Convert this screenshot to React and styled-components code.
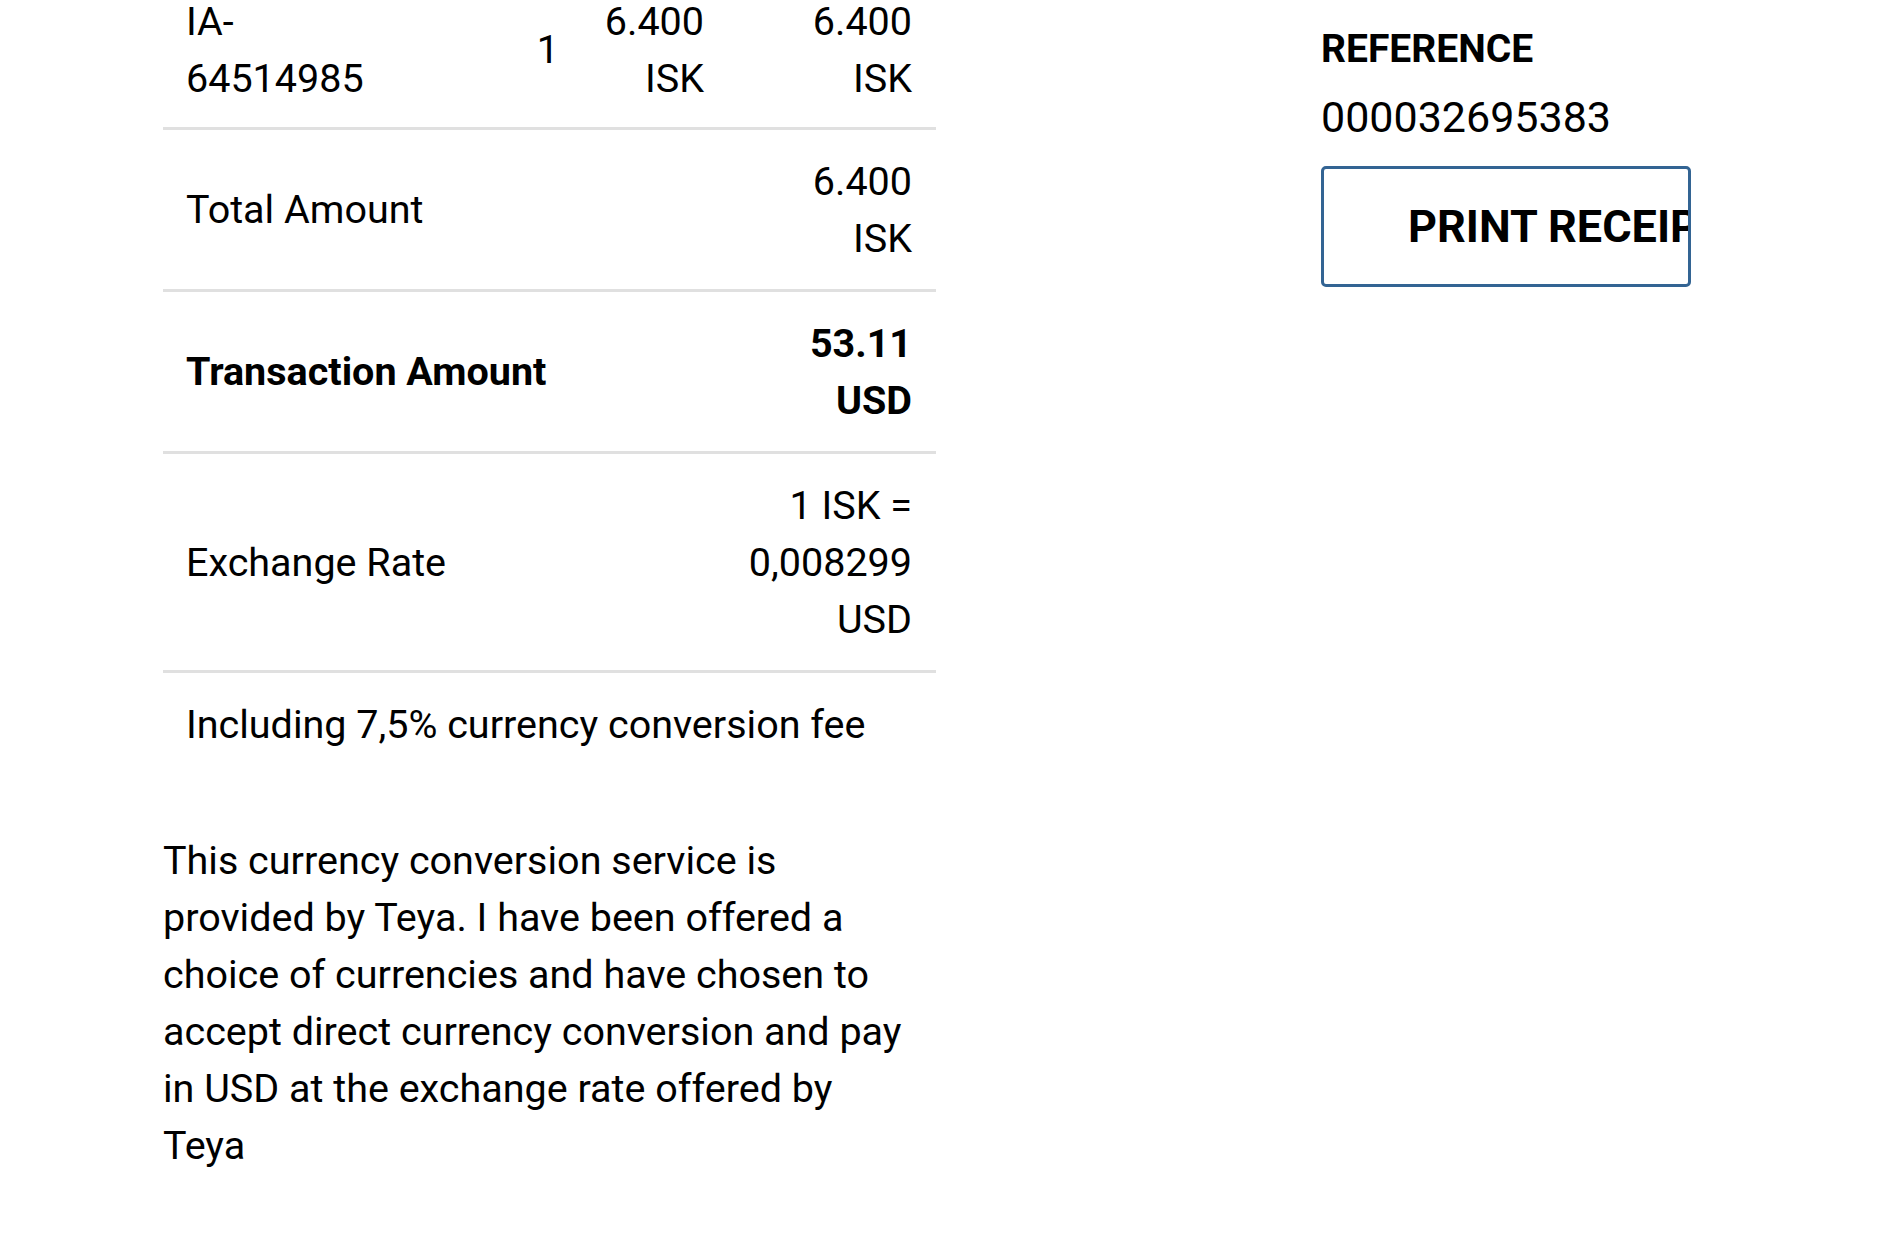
import React from "react";
import styled, { createGlobalStyle } from "styled-components";

const GlobalStyle = createGlobalStyle`
    html, body {
        margin: 0;
        padding: 0;
        background: #ffffff;
    }
    body {
        font-family: Roboto, "Noto Sans", "Liberation Sans", sans-serif;
        color: #000000;
        overflow: hidden;
    }
`;

const items = [{ name: "IA-64514985", qty: "1", price: ["6.400", "ISK"], total: ["6.400", "ISK"] }];

const summary = [
    { label: "Total Amount", value: ["6.400", "ISK"] },
    { label: "Transaction Amount", value: ["53.11", "USD"], bold: true },
    { label: "Exchange Rate", value: ["1 ISK =", "0,008299", "USD"] },
];

function Lines({ lines }) {
    return lines.map((l, i) => <span key={i}>{l}</span>);
}

export default function App() {
    return (
        <>
            <GlobalStyle />
            <S.page>
                <S.receipt>
                    <S.table>
                        {items.map((it) => (
                            <S.itemRow key={it.name}>
                                <S.itemName>{it.name}</S.itemName>
                                <S.num>{it.qty}</S.num>
                                <S.num>
                                    <Lines lines={it.price} />
                                </S.num>
                                <S.num>
                                    <Lines lines={it.total} />
                                </S.num>
                            </S.itemRow>
                        ))}
                        {summary.map((row) => (
                            <S.sumRow key={row.label} $bold={row.bold}>
                                <S.label>{row.label}</S.label>
                                <S.num>
                                    <Lines lines={row.value} />
                                </S.num>
                            </S.sumRow>
                        ))}
                        <S.note>Including 7,5% currency conversion fee</S.note>
                    </S.table>
                    <S.disclaimer>
                        This currency conversion service is provided by Teya. I
                        have been offered a choice of currencies and have chosen
                        to accept direct currency conversion and pay in USD at
                        the exchange rate offered by Teya
                    </S.disclaimer>
                </S.receipt>
                <S.side>
                    <S.refTitle>REFERENCE</S.refTitle>
                    <S.refValue>000032695383</S.refValue>
                    <S.printButton>PRINT RECEIPT</S.printButton>
                </S.side>
            </S.page>
        </>
    );
}

const S = {
    page: styled.div`
        display: flex;
        flex-direction: row;
        align-items: flex-start;
        padding-left: 163px;
        gap: 385px;
        font-size: 39.5px;
        line-height: 57px;
    `,
    receipt: styled.div`
        width: 773px;
        margin-top: -30.5px;
        display: flex;
        flex-direction: column;
    `,
    table: styled.div`
        display: flex;
        flex-direction: column;
    `,
    itemRow: styled.div`
        display: grid;
        grid-template-columns: 240px 180px 145px 208px;
        align-items: center;
        border-bottom: 3px solid #e0e0e0;

        & > div {
            padding-top: 23px;
            padding-bottom: 20.5px;
        }
    `,
    itemName: styled.div`
        padding: 23px;
        width: 180px;
        word-break: break-word;
    `,
    sumRow: styled.div`
        display: flex;
        justify-content: space-between;
        align-items: center;
        border-bottom: 3px solid #e0e0e0;
        font-weight: ${(p) => (p.$bold ? 700 : 400)};
    `,
    label: styled.div`
        padding: 23px;
    `,
    num: styled.div`
        padding: 22.5px 24px 22.5px 0;
        display: flex;
        flex-direction: column;
        align-items: flex-end;
        text-align: right;
    `,
    note: styled.div`
        padding: 23px;
    `,
    disclaimer: styled.p`
        margin: 56px 0 0 0;
        width: 760px;
    `,
    side: styled.div`
        width: 370px;
        padding-top: 21px;
        display: flex;
        flex-direction: column;
    `,
    refTitle: styled.div`
        font-size: 39px;
        font-weight: 700;
        text-transform: uppercase;
    `,
    refValue: styled.div`
        margin-top: 9px;
        font-size: 43px;
        line-height: 60px;
    `,
    printButton: styled.button`
        margin-top: 19px;
        width: 370px;
        height: 121px;
        box-sizing: border-box;
        padding: 0 0 0 84px;
        background: #ffffff;
        border: 3px solid #336493;
        border-radius: 5px;
        font-family: Roboto, "Noto Sans", sans-serif;
        font-size: 45px;
        font-weight: 700;
        color: #000000;
        text-align: left;
        white-space: nowrap;
        overflow: hidden;
        cursor: pointer;
    `,
};
